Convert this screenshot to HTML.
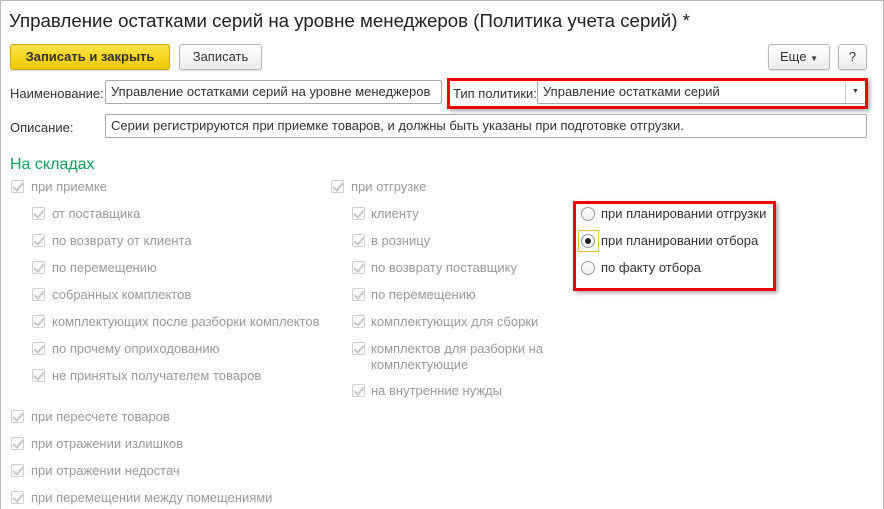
<!DOCTYPE html>
<html><head><meta charset="utf-8"><style>
*{box-sizing:border-box;margin:0;padding:0}
body{width:884px;height:509px;background:#fff;font-family:"Liberation Sans",Arial,sans-serif;font-size:13px;color:#333;position:relative;overflow:hidden}
.frame{position:absolute;left:0;top:0;width:884px;height:509px;border:1px solid #bcbcbc;border-bottom:none}
.a{position:absolute;white-space:nowrap}
.btn{position:absolute;height:26px;border:1px solid #b8b8b8;border-radius:3px;background:linear-gradient(#fff,#ececec);box-shadow:0 1px 1px rgba(0,0,0,.15);text-align:center;line-height:24px;color:#333}
.field{position:absolute;height:24px;border:1px solid #aaa;border-radius:2px;background:#fff;line-height:22px;padding-left:5px;color:#333}
.cb{position:absolute;width:13px;height:13px;border:1px solid #d0d0d0;border-radius:2px;background:#fafafa}
.cb:after{content:"";position:absolute;left:3px;top:0px;width:4px;height:8px;border:solid #c8c8c8;border-width:0 2px 2px 0;transform:rotate(40deg)}
.t{position:absolute;color:#9a9a9a;white-space:nowrap}
.rb{position:absolute;width:14px;height:14px;border:1px solid #999;border-radius:50%;background:linear-gradient(#fff,#eee)}
.red{position:absolute;border:3px solid #e00;box-shadow:2px 2px 4px rgba(0,0,0,.35)}
</style></head><body>
<div class="frame"></div>
<div class="a" style="left:9px;top:10px;font-size:18.7px;color:#222">Управление остатками серий на уровне менеджеров (Политика учета серий) *</div>
<div class="btn" style="left:10px;top:44px;width:160px;background:linear-gradient(#fbe34a,#f0c800);border-color:#c9a800;font-weight:bold;color:#333">Записать и закрыть</div>
<div class="btn" style="left:179px;top:44px;width:83px">Записать</div>
<div class="btn" style="left:768px;top:44px;width:62px">Еще <span style="font-size:8px">▼</span></div>
<div class="btn" style="left:838px;top:44px;width:29px">?</div>

<div class="a" style="left:10px;top:86px">Наименование:</div>
<div class="field" style="left:105px;top:80px;width:337px">Управление остатками серий на уровне менеджеров</div>
<div class="a" style="left:453px;top:86px">Тип политики:</div>
<div class="field" style="left:537px;top:80px;width:329px">Управление остатками серий<div style="position:absolute;right:0;top:0;width:20px;height:22px;border-left:1px solid #ccc;text-align:center;font-size:7px;line-height:22px">▼</div></div>
<div class="red" style="left:447px;top:78px;width:421px;height:31px"></div>

<div class="a" style="left:10px;top:120px">Описание:</div>
<div class="field" style="left:105px;top:114px;width:762px">Серии регистрируются при приемке товаров, и должны быть указаны при подготовке отгрузки.</div>

<div class="a" style="left:10px;top:156px;font-size:16px;color:#12a060">На складах</div>

<div class="cb" style="left:11px;top:180px"></div><div class="t" style="left:31px;top:179px">при приемке</div>
<div class="cb" style="left:32px;top:207px"></div><div class="t" style="left:52px;top:206px">от поставщика</div>
<div class="cb" style="left:32px;top:234px"></div><div class="t" style="left:52px;top:233px">по возврату от клиента</div>
<div class="cb" style="left:32px;top:261px"></div><div class="t" style="left:52px;top:260px">по перемещению</div>
<div class="cb" style="left:32px;top:288px"></div><div class="t" style="left:52px;top:287px">собранных комплектов</div>
<div class="cb" style="left:32px;top:315px"></div><div class="t" style="left:52px;top:314px">комплектующих после разборки комплектов</div>
<div class="cb" style="left:32px;top:342px"></div><div class="t" style="left:52px;top:341px">по прочему оприходованию</div>
<div class="cb" style="left:32px;top:369px"></div><div class="t" style="left:52px;top:368px">не принятых получателем товаров</div>
<div class="cb" style="left:11px;top:410px"></div><div class="t" style="left:31px;top:409px">при пересчете товаров</div>
<div class="cb" style="left:11px;top:437px"></div><div class="t" style="left:31px;top:436px">при отражении излишков</div>
<div class="cb" style="left:11px;top:464px"></div><div class="t" style="left:31px;top:463px">при отражении недостач</div>
<div class="cb" style="left:11px;top:491px"></div><div class="t" style="left:31px;top:490px">при перемещении между помещениями</div>

<div class="cb" style="left:331px;top:180px"></div><div class="t" style="left:351px;top:179px">при отгрузке</div>
<div class="cb" style="left:352px;top:207px"></div><div class="t" style="left:371px;top:206px">клиенту</div>
<div class="cb" style="left:352px;top:234px"></div><div class="t" style="left:371px;top:233px">в розницу</div>
<div class="cb" style="left:352px;top:261px"></div><div class="t" style="left:371px;top:260px">по возврату поставщику</div>
<div class="cb" style="left:352px;top:288px"></div><div class="t" style="left:371px;top:287px">по перемещению</div>
<div class="cb" style="left:352px;top:315px"></div><div class="t" style="left:371px;top:314px">комплектующих для сборки</div>
<div class="cb" style="left:352px;top:342px"></div><div class="t" style="left:371px;top:341px;line-height:16px">комплектов для разборки на<br>комплектующие</div>
<div class="cb" style="left:352px;top:384px"></div><div class="t" style="left:371px;top:383px">на внутренние нужды</div>

<div class="red" style="left:573px;top:201px;width:203px;height:90px"></div>
<div class="rb" style="left:581px;top:207px"></div><div class="a" style="left:601px;top:206px">при планировании отгрузки</div>
<div style="position:absolute;left:578px;top:230px;width:21px;height:22px;border:1px solid #e8c040"></div>
<div class="rb" style="left:581px;top:234px"><div style="position:absolute;left:3px;top:3px;width:6px;height:6px;border-radius:50%;background:#222"></div></div><div class="a" style="left:601px;top:233px">при планировании отбора</div>
<div class="rb" style="left:581px;top:261px"></div><div class="a" style="left:601px;top:260px">по факту отбора</div>
</body></html>
